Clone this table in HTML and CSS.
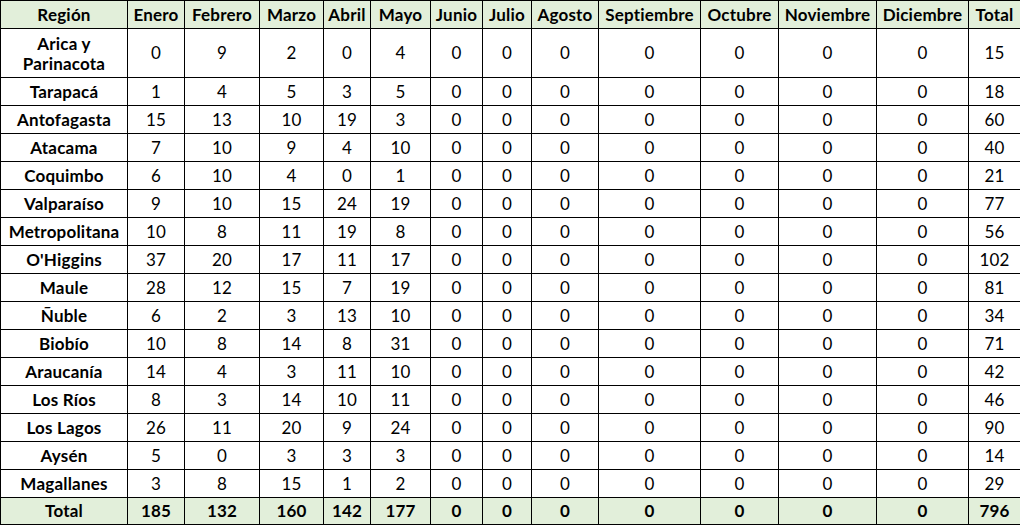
FILE: index.html
```html
<!DOCTYPE html>
<html lang="es">
<head>
<meta charset="utf-8">
<title>Región por mes</title>
<link rel="stylesheet" href="styles.css">
</head>
<body>
<table class="grid">
  <colgroup>
    <col class="c-reg"><col class="c-ene"><col class="c-feb"><col class="c-mar"><col class="c-abr"><col class="c-may"><col class="c-jun"><col class="c-jul"><col class="c-ago"><col class="c-sep"><col class="c-oct"><col class="c-nov"><col class="c-dic"><col class="c-tot">
  </colgroup>
  <thead>
    <tr class="head">
      <th>Región</th><th>Enero</th><th>Febrero</th><th>Marzo</th><th>Abril</th><th>Mayo</th><th>Junio</th><th>Julio</th><th>Agosto</th><th>Septiembre</th><th>Octubre</th><th>Noviembre</th><th>Diciembre</th><th>Total</th>
    </tr>
  </thead>
  <tbody>
    <tr class="tall"><th>Arica y<br>Parinacota</th><td>0</td><td>9</td><td>2</td><td>0</td><td>4</td><td>0</td><td>0</td><td>0</td><td>0</td><td>0</td><td>0</td><td>0</td><td>15</td></tr>
    <tr><th>Tarapacá</th><td>1</td><td>4</td><td>5</td><td>3</td><td>5</td><td>0</td><td>0</td><td>0</td><td>0</td><td>0</td><td>0</td><td>0</td><td>18</td></tr>
    <tr><th>Antofagasta</th><td>15</td><td>13</td><td>10</td><td>19</td><td>3</td><td>0</td><td>0</td><td>0</td><td>0</td><td>0</td><td>0</td><td>0</td><td>60</td></tr>
    <tr><th>Atacama</th><td>7</td><td>10</td><td>9</td><td>4</td><td>10</td><td>0</td><td>0</td><td>0</td><td>0</td><td>0</td><td>0</td><td>0</td><td>40</td></tr>
    <tr><th>Coquimbo</th><td>6</td><td>10</td><td>4</td><td>0</td><td>1</td><td>0</td><td>0</td><td>0</td><td>0</td><td>0</td><td>0</td><td>0</td><td>21</td></tr>
    <tr><th>Valparaíso</th><td>9</td><td>10</td><td>15</td><td>24</td><td>19</td><td>0</td><td>0</td><td>0</td><td>0</td><td>0</td><td>0</td><td>0</td><td>77</td></tr>
    <tr><th>Metropolitana</th><td>10</td><td>8</td><td>11</td><td>19</td><td>8</td><td>0</td><td>0</td><td>0</td><td>0</td><td>0</td><td>0</td><td>0</td><td>56</td></tr>
    <tr><th>O'Higgins</th><td>37</td><td>20</td><td>17</td><td>11</td><td>17</td><td>0</td><td>0</td><td>0</td><td>0</td><td>0</td><td>0</td><td>0</td><td>102</td></tr>
    <tr><th>Maule</th><td>28</td><td>12</td><td>15</td><td>7</td><td>19</td><td>0</td><td>0</td><td>0</td><td>0</td><td>0</td><td>0</td><td>0</td><td>81</td></tr>
    <tr><th>Ñuble</th><td>6</td><td>2</td><td>3</td><td>13</td><td>10</td><td>0</td><td>0</td><td>0</td><td>0</td><td>0</td><td>0</td><td>0</td><td>34</td></tr>
    <tr><th>Biobío</th><td>10</td><td>8</td><td>14</td><td>8</td><td>31</td><td>0</td><td>0</td><td>0</td><td>0</td><td>0</td><td>0</td><td>0</td><td>71</td></tr>
    <tr><th>Araucanía</th><td>14</td><td>4</td><td>3</td><td>11</td><td>10</td><td>0</td><td>0</td><td>0</td><td>0</td><td>0</td><td>0</td><td>0</td><td>42</td></tr>
    <tr><th>Los Ríos</th><td>8</td><td>3</td><td>14</td><td>10</td><td>11</td><td>0</td><td>0</td><td>0</td><td>0</td><td>0</td><td>0</td><td>0</td><td>46</td></tr>
    <tr><th>Los Lagos</th><td>26</td><td>11</td><td>20</td><td>9</td><td>24</td><td>0</td><td>0</td><td>0</td><td>0</td><td>0</td><td>0</td><td>0</td><td>90</td></tr>
    <tr><th>Aysén</th><td>5</td><td>0</td><td>3</td><td>3</td><td>3</td><td>0</td><td>0</td><td>0</td><td>0</td><td>0</td><td>0</td><td>0</td><td>14</td></tr>
    <tr><th>Magallanes</th><td>3</td><td>8</td><td>15</td><td>1</td><td>2</td><td>0</td><td>0</td><td>0</td><td>0</td><td>0</td><td>0</td><td>0</td><td>29</td></tr>
  </tbody>
  <tfoot>
    <tr class="foot"><th>Total</th><td>185</td><td>132</td><td>160</td><td>142</td><td>177</td><td>0</td><td>0</td><td>0</td><td>0</td><td>0</td><td>0</td><td>0</td><td>796</td></tr>
  </tfoot>
</table>
</body>
</html>
```

FILE: styles.css
```css
html, body {
  margin: 0;
  padding: 0;
  background: #ffffff;
}

.grid {
  border-collapse: collapse;
  table-layout: fixed;
  width: 1020px;
  font-family: "Lato", "Open Sans", sans-serif;
  font-size: 17px;
  line-height: 20px;
  letter-spacing: 0.2px;
  color: #000000;
}

.grid th,
.grid td {
  border: 1px solid #000000;
  padding: 0 1px;
  text-align: center;
  vertical-align: middle;
  white-space: nowrap;
  overflow: hidden;
}

.grid th { font-weight: 700; }
.grid td { font-weight: 400; }

.grid tr { height: 28px; }
.grid tr.tall { height: 49px; }
.grid tr.tall th { line-height: 20px; padding-top: 1px; }
.grid tr.foot { height: 27px; }

.grid .head th,
.grid .foot th,
.grid .foot td {
  background: #e2efda;
  font-weight: 700;
}

.c-reg { width: 127px; }
.c-ene { width: 57px; }
.c-feb { width: 75px; }
.c-mar { width: 64px; }
.c-abr { width: 47px; }
.c-may { width: 60px; }
.c-jun { width: 52px; }
.c-jul { width: 49px; }
.c-ago { width: 67px; }
.c-sep { width: 102px; }
.c-oct { width: 78px; }
.c-nov { width: 98px; }
.c-dic { width: 92px; }
.c-tot { width: 52px; }
```
